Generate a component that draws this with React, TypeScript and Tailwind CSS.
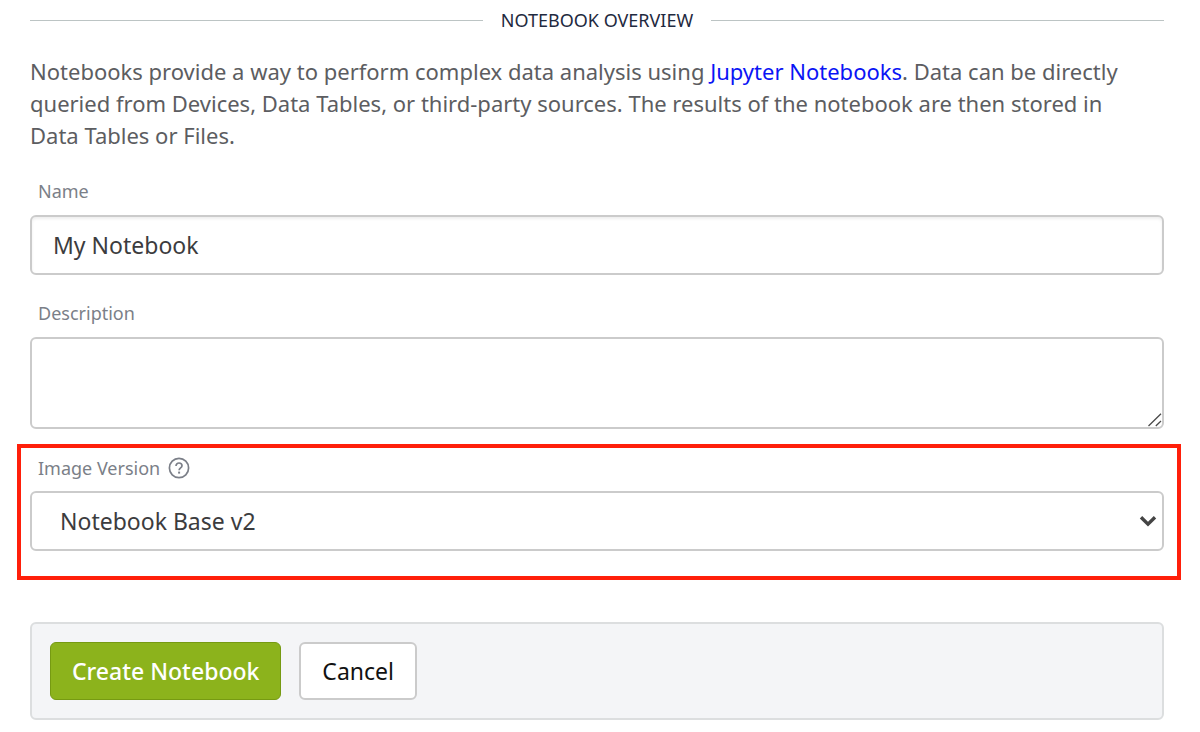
import { FC, useState } from 'react';

const HelpIcon: FC = () => (
  <svg className="size-[22px]" viewBox="0 0 22 22" fill="none" stroke="currentColor" strokeWidth="1.7" aria-hidden="true">
    <circle cx="11" cy="11" r="9.6" />
    <path d="M8 8.9c0-1.8 1.3-2.9 3-2.9s3 1.1 3 2.7c0 2.2-2.9 2.3-2.9 4.6" />
    <path d="M10.1 15.6h2" strokeWidth="2" />
  </svg>
);

const App: FC = () => {
  const [notebook, setNotebook] = useState({ name: 'My Notebook', description: '', image: 'v2' });

  const onChange = (e: React.ChangeEvent<HTMLInputElement | HTMLTextAreaElement | HTMLSelectElement>) => {
    setNotebook({ ...notebook, [e.target.name]: e.target.value });
  };

  return (
    <form
      className="bg-white pt-2 pr-9 pb-3 pl-[30px] font-['Noto_Sans',sans-serif] text-[23px] text-[#3c3c3e]"
      onSubmit={(e) => e.preventDefault()}
    >
      <div className="flex items-center gap-[18px]">
        <div className="h-px flex-1 bg-[#bcc4c4]" />
        <h2 className="text-[18px] leading-6 text-[#1f2a40] uppercase">Notebook Overview</h2>
        <div className="h-px flex-1 bg-[#bcc4c4]" />
      </div>

      <p className="mt-[23px] pr-7 text-[22px] leading-8 text-[#5c5d61]">
        Notebooks provide a way to perform complex data analysis using{' '}
        <a href="#jupyter" className="text-[#0a14f5]">Jupyter Notebooks</a>. Data can be directly
        queried from Devices, Data Tables, or third-party sources. The results of the notebook are
        then stored in Data Tables or Files.
      </p>

      <div className="mt-7">
        <label htmlFor="name" className="block pl-2 text-[18px] leading-6 text-[#7b7f88]">Name</label>
        <input
          id="name"
          name="name"
          type="text"
          value={notebook.name}
          onChange={onChange}
          className="mt-3 block h-[60px] w-full rounded-md border-2 border-[#cbcbcb] px-[21px] shadow-[inset_0_2px_3px_rgba(0,0,0,0.07)] outline-none"
        />
      </div>

      <div className="mt-[26px]">
        <label htmlFor="description" className="block pl-2 text-[18px] leading-6 text-[#7b7f88]">Description</label>
        <div className="relative mt-3">
          <textarea
            id="description"
            name="description"
            value={notebook.description}
            onChange={onChange}
            className="block h-[92px] w-full resize-none rounded-md border-2 border-[#cbcbcb] px-[21px] py-3 outline-none"
          />
          <svg className="pointer-events-none absolute right-[2px] bottom-[2px] size-[14px]" viewBox="0 0 14 14" stroke="#4a4a4a" strokeWidth="1.3" aria-hidden="true">
            <path d="M.5 13 13 .8M7.8 13 13 8" />
          </svg>
        </div>
      </div>

      <div className="mt-[15px] -mr-[17px] -ml-[13px] border-4 border-[#ff1f0a] pt-2 pr-[13px] pb-[25px] pl-[9px]">
        <div className="flex items-center gap-2 pl-2 text-[18px] leading-6 text-[#7b7f88]">
          <label htmlFor="image">Image Version</label>
          <HelpIcon />
        </div>
        <div className="relative mt-[11px]">
          <select
            id="image"
            name="image"
            value={notebook.image}
            onChange={onChange}
            className="block h-[60px] w-full appearance-none rounded-md border-2 border-[#cbcbcb] bg-white px-7 outline-none"
          >
            <option value="v2">Notebook Base v2</option>
            <option value="v1">Notebook Base v1</option>
          </select>
          <svg className="pointer-events-none absolute top-[24px] right-[7px] h-3 w-[18px]" viewBox="0 0 18 12" fill="none" stroke="#444" strokeWidth="3.4" aria-hidden="true">
            <path d="m2 2.2 7 6.9 7-6.9" />
          </svg>
        </div>
      </div>

      <div className="mt-[42px] flex gap-[18px] rounded-md border-2 border-[#dcdedf] bg-[#f4f5f7] p-[18px]">
        <button type="submit" className="h-[58px] rounded-md border border-[#769a12] bg-[#8cb31c] px-[21px] font-medium text-white">
          Create Notebook
        </button>
        <button type="button" className="h-[58px] rounded-md border-2 border-[#cbcbcb] bg-white px-[21px] text-[#111]">
          Cancel
        </button>
      </div>
    </form>
  );
};

export default App;
